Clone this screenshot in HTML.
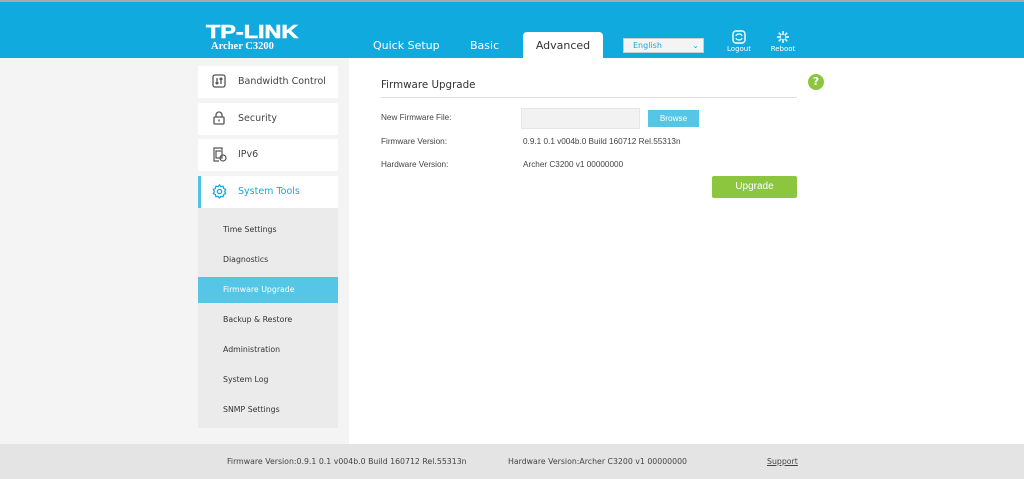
<!DOCTYPE html><html><head><style>
*{margin:0;padding:0;box-sizing:border-box}
body{width:1024px;height:479px;overflow:hidden;background:#f4f4f4;font-family:"DejaVu Sans","Liberation Sans",sans-serif;position:relative}
.hdr{position:absolute;top:0;left:0;width:1024px;height:58px;background:#11aadf;border-top:2px solid #a9a9a9}
.abs{position:absolute}
.logo{left:206px;top:22px;color:#fff;font-family:"Liberation Sans",sans-serif;font-weight:900;font-size:18px;transform:scaleX(1.3);transform-origin:left;-webkit-text-stroke:0.6px #fff}
.model{left:211px;top:41px;color:#fff;font-family:"Liberation Serif",serif;font-weight:bold;font-size:10.5px}
.tab{top:39px;color:#fff;font-size:11px}
.adv{left:523px;top:32px;width:80px;height:26px;background:#fff;border-radius:4px 4px 0 0;color:#333;font-size:11px;text-align:center;line-height:28px}
.sel{left:623px;top:38px;width:81px;height:15px;background:#f4f4f4;border:1px solid #ccc;color:#11aadf;font-size:8px;padding-left:9px;line-height:13px}
.ico{color:#fff;font-size:7px;text-align:center}
.content{left:349px;top:58px;width:675px;height:386px;background:#fff}
.menu{left:198px;width:140px;height:32px;background:#fff;font-size:9.5px;color:#444;line-height:32px;padding-left:40px}
.sub{left:198px;top:208px;width:140px;height:220px;background:#ebebeb}
.si{position:absolute;left:0;width:140px;height:26px;line-height:26px;padding-left:25px;font-size:7.8px;color:#333}
.lbl{font-family:"Liberation Sans",sans-serif;font-size:8.2px;color:#444}
.foot{left:0;top:444px;width:1024px;height:35px;background:#e4e4e4;font-size:7.8px;color:#444}
svg{position:absolute}
</style></head><body>
<div class="hdr"></div>
<div class="abs logo">TP-LINK</div>
<div class="abs model">Archer C3200</div>
<div class="abs tab" style="left:373px">Quick Setup</div>
<div class="abs tab" style="left:470px">Basic</div>
<div class="abs adv">Advanced</div>
<div class="abs sel">English<span style="position:absolute;right:4px;top:0;color:#11aadf;font-size:8px">&#8964;</span></div>
<svg style="left:732px;top:30px" width="14" height="14" viewBox="0 0 14 14"><rect x="1" y="1" width="12" height="12" rx="3" fill="none" stroke="#fff" stroke-width="1.4"/><path d="M4 6a3 2 0 0 1 6 0M10 8a3 2 0 0 1-6 0" fill="none" stroke="#fff" stroke-width="1.2"/></svg>
<div class="abs ico" style="left:725px;top:45px;width:28px">Logout</div>
<svg style="left:776px;top:30px" width="14" height="14" viewBox="0 0 14 14" stroke="#fff" stroke-width="1.5"><path d="M7 1v4M7 9v4M1 7h4M9 7h4M2.8 2.8l2.5 2.5M8.7 8.7l2.5 2.5M11.2 2.8l-2.5 2.5M5.3 8.7l-2.5 2.5"/></svg>
<div class="abs ico" style="left:769px;top:45px;width:28px">Reboot</div>
<div class="abs content"></div>
<div class="abs menu" style="top:66px">Bandwidth Control</div>
<div class="abs menu" style="top:103px">Security</div>
<div class="abs menu" style="top:139px">IPv6</div>
<div class="abs menu" style="top:176px;color:#11aadf;border-left:3px solid #4dc4e6;padding-left:37px">System Tools</div>
<svg style="left:212px;top:74px" width="14" height="14" viewBox="0 0 14 14" fill="none" stroke="#555" stroke-width="1.3"><rect x="1" y="1" width="12" height="12" rx="2"/><path d="M5 4v6M3.5 8.5L5 10l1.5-1.5M9 10V4M7.5 5.5L9 4l1.5 1.5"/></svg>
<svg style="left:213px;top:111px" width="12" height="14" viewBox="0 0 12 14" fill="none" stroke="#555" stroke-width="1.3"><path d="M3 6V4a3 3 0 0 1 6 0v2"/><rect x="1" y="6" width="10" height="7" rx="1"/><path d="M6 8.5v2"/></svg>
<svg style="left:213px;top:147px" width="14" height="15" viewBox="0 0 14 15" fill="none" stroke="#555" stroke-width="1.2"><path d="M9 3V1H1v13h5"/><rect x="3" y="4" width="6" height="7"/><circle cx="10" cy="11" r="3"/></svg>
<svg style="left:212px;top:184px" width="15" height="15" viewBox="0 0 16 16" fill="none" stroke="#11aadf" stroke-width="1.4"><path d="M8 1l1.5 1.8 2.3-.4.6 2.3 2.1 1.1-.9 2.2.9 2.2-2.1 1.1-.6 2.3-2.3-.4L8 15l-1.5-1.8-2.3.4-.6-2.3-2.1-1.1.9-2.2-.9-2.2 2.1-1.1.6-2.3 2.3.4z"/><circle cx="8" cy="8" r="2.3"/></svg>
<div class="abs sub">
<div class="si" style="top:9px">Time Settings</div>
<div class="si" style="top:39px">Diagnostics</div>
<div class="si" style="top:69px;background:#55c6e5;color:#fff">Firmware Upgrade</div>
<div class="si" style="top:99px">Backup &amp; Restore</div>
<div class="si" style="top:129px">Administration</div>
<div class="si" style="top:159px">System Log</div>
<div class="si" style="top:189px">SNMP Settings</div>
</div>
<div class="abs" style="left:381px;top:79px;font-size:10.3px;color:#333">Firmware Upgrade</div>
<div class="abs" style="left:381px;top:97px;width:416px;height:1px;background:#ddd"></div>
<div class="abs" style="left:808px;top:74px;width:16px;height:16px;border-radius:50%;background:#8cc63f;color:#fff;font-size:11px;font-weight:bold;text-align:center;line-height:16px">?</div>
<div class="abs lbl" style="left:381px;top:113px">New Firmware File:</div>
<div class="abs" style="left:521px;top:108px;width:119px;height:21px;background:#f2f2f2;border:1px solid #e6e6e6"></div>
<div class="abs lbl" style="left:648px;top:110px;width:51px;height:17px;background:#55c6e5;color:#fff;text-align:center;line-height:17px">Browse</div>
<div class="abs lbl" style="left:381px;top:137px">Firmware Version:</div>
<div class="abs lbl" style="left:523px;top:137px">0.9.1 0.1 v004b.0 Build 160712 Rel.55313n</div>
<div class="abs lbl" style="left:381px;top:160px">Hardware Version:</div>
<div class="abs lbl" style="left:523px;top:160px">Archer C3200 v1 00000000</div>
<div class="abs lbl" style="left:712px;top:176px;width:85px;height:22px;background:#8cc63f;color:#fff;font-size:10px;text-align:center;line-height:22px;border-radius:2px">Upgrade</div>
<div class="abs foot"><span class="abs" style="left:227px;top:13px">Firmware Version:0.9.1 0.1 v004b.0 Build 160712 Rel.55313n</span><span class="abs" style="left:508px;top:13px">Hardware Version:Archer C3200 v1 00000000</span><span class="abs" style="left:767px;top:13px;text-decoration:underline">Support</span></div>
</body></html>
